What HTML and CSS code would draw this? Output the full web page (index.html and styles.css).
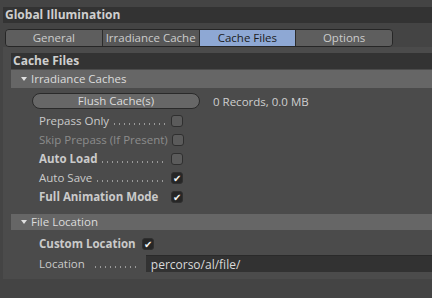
FILE: index.html
```html
<!DOCTYPE html>
<html lang="en">
  <head>
    <meta charset="UTF-8" />
    <title>Global Illumination</title>
    <link rel="stylesheet" href="styles.css">
  </head>
  <body>
    <div class="title">Global Illumination</div>

    <div class="tabs">
      <div class="tab">General</div>
      <div class="tab tab-dim">Irradiance Cache</div>
      <div class="tab active">Cache Files</div>
      <div class="tab">Options</div>
    </div>

    <div class="panel">
      <div class="group-title">Cache Files</div>

      <div class="section">Irradiance Caches</div>
      <div class="btn-row">
        <button class="btn">Flush Cache(s)</button>
        <span class="info">0 Records, 0.0 MB</span>
      </div>
      <div class="row">
        <span class="label">Prepass Only</span><span class="dots"></span>
        <span class="check"></span>
      </div>
      <div class="row disabled">
        <span class="label">Skip Prepass (If Present)</span><span class="gap"></span>
        <span class="check"></span>
      </div>
      <div class="row">
        <span class="label bold">Auto Load</span><span class="dots"></span>
        <span class="check"></span>
      </div>
      <div class="row">
        <span class="label">Auto Save</span><span class="dots"></span>
        <span class="check on">&#10004;</span>
      </div>
      <div class="row">
        <span class="label bold">Full Animation Mode</span><span class="gap"></span>
        <span class="check on">&#10004;</span>
      </div>

      <div class="section section-2">File Location</div>
      <div class="row row-short">
        <span class="label bold">Custom Location</span>
        <span class="check on">&#10004;</span>
      </div>
      <div class="row loc-row">
        <span class="label">Location</span><span class="dots"></span>
        <input class="path" type="text" value="percorso/al/file/" />
      </div>
    </div>
  </body>
</html>
```

FILE: styles.css
```css
* {
  margin: 0;
  padding: 0;
  box-sizing: border-box;
}
body {
  font-family: "Open Sans", sans-serif;
  font-size: 11.5px;
  color: #c9c9c9;
  background: #444;
  width: 432px;
  height: 298px;
  overflow: hidden;
}
.title {
  margin: 7px 0 0 3px;
  height: 16px;
  line-height: 16px;
  padding-left: 2px;
  background: #333;
  font-weight: bold;
  font-size: 12px;
  color: #cfcfcf;
}
.tabs {
  display: flex;
  margin: 6px 39px 0 5px;
  height: 18px;
  border: 1px solid #262626;
  border-radius: 4px;
  overflow: hidden;
}
.tab {
  flex: 1;
  text-align: center;
  line-height: 16px;
  background: #5e5e5e;
  color: #cccccc;
  border-left: 1px solid #2c2c2c;
  white-space: nowrap;
}
.tab:first-child {
  border-left: none;
}
.tab-dim {
  background: #575757;
}
.tab.active {
  background: #8ea8d4;
  color: #1c1c1c;
}
.panel {
  margin-left: 3px;
  padding: 6px 0 0 8px;
  height: 232px;
  background: #4b4b4b;
}
.group-title {
  height: 16px;
  line-height: 16px;
  padding-left: 2px;
  background: #333;
  font-weight: bold;
  font-size: 12px;
  color: #cfcfcf;
}
.section {
  margin-top: 1px;
  height: 18px;
  line-height: 18px;
  padding-left: 20px;
  background: #666;
  color: #dcdcdc;
  position: relative;
}
.section::before {
  content: "";
  position: absolute;
  left: 10px;
  top: 7px;
  border-left: 3.5px solid transparent;
  border-right: 3.5px solid transparent;
  border-top: 4px solid #e0e0e0;
}
.section-2 {
  margin-top: 8px;
  height: 16px;
  line-height: 16px;
}
.section-2::before {
  top: 6px;
}
.btn-row {
  display: flex;
  align-items: center;
  margin-top: 5px;
  height: 16px;
}
.btn {
  margin-left: 21px;
  width: 168px;
  height: 16px;
  border: 1px solid #2a2a2a;
  border-radius: 8px;
  background: #676767;
  color: #dcdcdc;
  font-family: inherit;
  font-size: 11.5px;
  line-height: 14px;
}
.info {
  margin-left: 13px;
  color: #cfcfcf;
}
.row {
  display: flex;
  align-items: center;
  height: 19px;
  padding-left: 28px;
  width: 144px;
  box-sizing: content-box;
}
.btn-row + .row {
  margin-top: 2px;
}
.label {
  white-space: nowrap;
  color: #cacaca;
}
.bold {
  font-weight: bold;
}
.disabled .label {
  color: #8c8c8c;
}
.dots {
  flex: 1;
  align-self: stretch;
  margin: 0 4px 0 3px;
  background: radial-gradient(circle, #9a9a9a 0.6px, transparent 1px) 0 12px / 5px 2px repeat-x;
}
.gap {
  flex: 1;
  min-width: 4px;
}
.check {
  flex: none;
  width: 12px;
  height: 12px;
  border: 1px solid #2f2f2f;
  border-radius: 3px;
  background: #5b5b5b;
  font-size: 10px;
  line-height: 11px;
  text-align: center;
  color: #f4f4f4;
}
.check.on {
  background: #262626;
}
.row-short {
  margin-top: 4px;
}
.row-short .label {
  margin-right: 6px;
}
.loc-row {
  width: auto;
  margin-top: 1px;
}
.loc-row .dots {
  flex: none;
  width: 44px;
  margin: 0 9px 0 8px;
}
.path {
  flex: 1;
  height: 17px;
  border: none;
  border-top: 1px solid #2a2a2a;
  background: #323232;
  color: #dadada;
  font-family: inherit;
  font-size: 12px;
  padding-left: 5px;
  outline: none;
}
```
